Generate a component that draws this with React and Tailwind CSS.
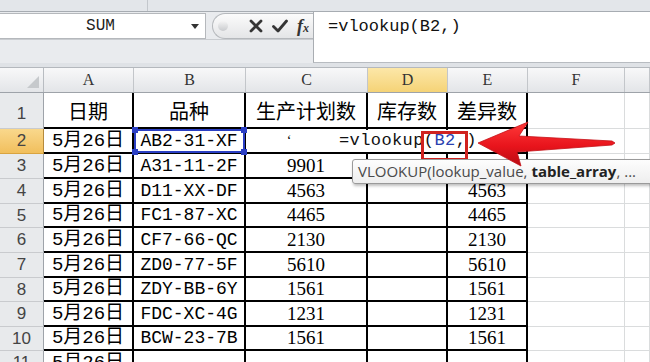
import React from 'react';

const COLS = ['A', 'B', 'C', 'D', 'E', 'F', ''];
const WIDTHS = ['w-[90px]', 'w-[112px]', 'w-[122px]', 'w-[80px]', 'w-[80px]', 'w-[97px]', 'flex-1'];
const HEIGHTS = ['h-[25px]', 'h-[25px]', 'h-[25px]', 'h-[24px]', 'h-[25px]', 'h-[25px]', 'h-[24px]', 'h-[25px]', 'h-[24px]', 'h-[25px]'];

// E3 sits under the function tooltip, so it stays blank here
const data = [
  ['5月26日', 'AB2-31-XF', '', '', ''],
  ['5月26日', 'A31-11-2F', '9901', '', ''],
  ['5月26日', 'D11-XX-DF', '4563', '', '4563'],
  ['5月26日', 'FC1-87-XC', '4465', '', '4465'],
  ['5月26日', 'CF7-66-QC', '2130', '', '2130'],
  ['5月26日', 'ZD0-77-5F', '5610', '', '5610'],
  ['5月26日', 'ZDY-BB-6Y', '1561', '', '1561'],
  ['5月26日', 'FDC-XC-4G', '1231', '', '1231'],
  ['5月26日', 'BCW-23-7B', '1561', '', '1561'],
  ['5月26日', '', '', '', ''],
];

function RowHeader({ n, hi, className }) {
  return (
    <div
      className={`w-[44px] shrink-0 flex justify-center border-r border-b ${hi ? 'bg-gradient-to-b from-[#f9d88c] to-[#f1bf5c] border-b-[#d9a440] border-r-[#b58a3c]' : 'bg-[#e8eaec] border-b-[#c9cbce] border-r-[#9ea3a9]'} text-[17px] text-[#444] font-['Liberation_Sans',sans-serif] ${className}`}
    >
      {n}
    </div>
  );
}

function Cell({ col, children, className = '' }) {
  const table = col < 5;
  return (
    <div
      className={`${WIDTHS[col]} shrink-0 flex justify-center ${table ? 'border-r-2 border-b-2 border-black' : 'border-r border-b border-[#dadcdd]'} ${className}`}
    >
      {children}
    </div>
  );
}

function cellFont(i) {
  if (i === 0) return "text-[19px] font-['Liberation_Mono','Noto_Sans_CJK_SC',monospace]";
  if (i === 1) return "text-[18px] font-['Liberation_Mono',monospace]";
  return "text-[19px] font-['Liberation_Serif',serif]";
}

export default function App() {
  return (
    <div className="relative w-[650px] h-[362px] overflow-hidden bg-white text-black">
      {/* ribbon remnant */}
      <div className="h-[12px] flex bg-[#e3e6ea] border-b border-[#a7acb2]">
        <div className="w-[148px] border-r border-[#c3c7cc]" />
        <div className="flex-1" />
      </div>

      {/* formula bar */}
      <div className="h-[51px] flex bg-[#e9ebee]">
        <div className="w-[313px] flex flex-col pt-[1px]">
          <div className="h-[26px] flex items-center">
            <div className="w-[206px] h-full bg-white border border-l-0 border-[#b5b8bc] flex items-center">
              <span className="flex-1 text-center pl-[10px] text-[16px] font-['Liberation_Mono',monospace] text-[#222]">SUM</span>
              <svg width="8" height="5" viewBox="0 0 8 5" className="mr-[6px]">
                <path d="M0 0h8L4 5z" fill="#333" />
              </svg>
            </div>
            <div className="ml-[6px] flex-1 h-full rounded-l-full border border-r-0 border-[#b5b8bc] bg-gradient-to-b from-[#fbfbfb] to-[#e4e5e7] flex items-center">
              <div className="ml-[5px] w-[10px] h-[10px] rounded-full bg-gradient-to-b from-[#f4f4f4] to-[#c9cbce]" />
              <svg width="14" height="14" viewBox="0 0 14 14" className="ml-[21px]">
                <path d="M2 2L12 12M12 2L2 12" stroke="#353535" strokeWidth="2.8" strokeLinecap="round" />
              </svg>
              <svg width="16" height="14" viewBox="0 0 16 14" className="ml-[9px]">
                <path d="M1.5 7.5L6 12L14.5 2" fill="none" stroke="#353535" strokeWidth="2.8" strokeLinecap="round" strokeLinejoin="round" />
              </svg>
              <span className="ml-[9px] font-['Liberation_Serif',serif] italic font-bold text-[18px] text-[#333] leading-none">
                f<span className="text-[12px]">x</span>
              </span>
            </div>
          </div>
          <div className="flex-1 border-t border-[#c9ccd0]" />
        </div>
        <div className="flex-1 bg-white border-l border-[#a9adb2] border-b border-b-[#b8bcc1] pl-[14px] pt-[4px] text-[17px] leading-[22px] font-['Liberation_Mono',monospace] text-[#111]">
          =vlookup(B2,)
        </div>
      </div>
      <div className="h-[5px] bg-[#dfe2e6] border-b border-[#b4b8bd]" />

      {/* column headers */}
      <div className="h-[25px] flex bg-gradient-to-b from-[#f8f8f9] to-[#e3e5e8] border-b border-[#9ea3a9]">
        <div className="w-[44px] shrink-0 border-r border-[#b8bcc1] relative">
          <svg width="12" height="12" viewBox="0 0 12 12" className="absolute right-[4px] bottom-[4px]">
            <path d="M12 0V12H0z" fill="#c6c9cc" />
          </svg>
        </div>
        {COLS.map((c, i) => (
          <div
            key={i}
            className={`${WIDTHS[i]} shrink-0 flex items-center justify-center border-r border-[#c3c6ca] text-[16px] text-[#333] font-['Liberation_Serif',serif] ${i === 3 ? 'bg-gradient-to-b from-[#fce7a8] to-[#f5d376]' : ''}`}
          >
            {c}
          </div>
        ))}
      </div>

      {/* row 1 */}
      <div className="h-[36px] flex">
        <RowHeader n="1" className="items-end pb-[2px]" />
        {['日期', '品种', '生产计划数', '库存数', '差异数', '', ''].map((t, i) => (
          <Cell key={i} col={i} className="items-end pb-[3px] text-[20px] leading-[26px] font-['Noto_Sans_CJK_SC',sans-serif]">
            {t}
          </Cell>
        ))}
      </div>

      {/* data rows */}
      {data.map((r, ri) => (
        <div key={ri} className={`${HEIGHTS[ri]} flex`}>
          <RowHeader n={ri + 2} hi={ri === 0} className="items-center" />
          {[...r, '', ''].map((t, i) => (
            <Cell key={i} col={i} className={`items-center leading-[20px] ${cellFont(i)}`}>
              {ri === 0 && i === 2 ? <span className="mr-[34px] text-[14px]">‘</span> : t}
            </Cell>
          ))}
        </div>
      ))}

      {/* B2 selection */}
      <div className="absolute left-[134px] top-[129px] w-[111px] h-[24px] border-2 border-[#2b3fc4]">
        <div className="absolute -left-[4px] -top-[4px] w-[6px] h-[6px] bg-[#2b3fc4]" />
        <div className="absolute -right-[4px] -top-[4px] w-[6px] h-[6px] bg-[#2b3fc4]" />
        <div className="absolute -left-[4px] -bottom-[4px] w-[6px] h-[6px] bg-[#2b3fc4]" />
        <div className="absolute -right-[4px] -bottom-[4px] w-[6px] h-[6px] bg-[#2b3fc4]" />
      </div>

      {/* in-cell editor */}
      <div className="absolute left-[334px] top-[130px] w-[146px] h-[22px] bg-white pl-[5px] flex items-center whitespace-nowrap text-[17px] tracking-[0.4px] leading-[20px] font-['Liberation_Mono',monospace] text-[#111]">
        =vlookup(<span className="text-[#2a3fb0]">B2</span>,)
      </div>

      {/* red highlight box */}
      <div className="absolute left-[421px] top-[131px] w-[47px] h-[30px] border-[3px] border-[#d0221f]" />

      {/* function tooltip */}
      <div className="absolute left-[352px] top-[159px] w-[320px] h-[25px] bg-gradient-to-b from-[#fdfdfd] to-[#eeeeee] border border-[#9a9a9a] rounded-[3px] shadow-[1px_2px_3px_rgba(0,0,0,0.25)] pl-[5px] flex items-center text-[15px] text-[#4a4a4a] font-['Open_Sans',sans-serif] whitespace-nowrap">
        VLOOKUP(lookup_value, <b className="text-[#222] ml-[4px]">table_array</b>, ...
      </div>

      {/* red arrow */}
      <svg className="absolute left-0 top-0 pointer-events-none" width="650" height="362" viewBox="0 0 650 362">
        <defs>
          <linearGradient id="arr" x1="0" y1="0" x2="0" y2="1">
            <stop offset="0" stopColor="#ff3a3a" />
            <stop offset="0.55" stopColor="#e8141c" />
            <stop offset="1" stopColor="#b80c12" />
          </linearGradient>
        </defs>
        <path
          d="M478 143 L528 122 L519 136 L612 141 L615 143 L612 145 L517 152 L521 166 Z"
          fill="url(#arr)"
          stroke="#c51016"
          strokeWidth="0.8"
          strokeLinejoin="round"
        />
      </svg>
    </div>
  );
}
